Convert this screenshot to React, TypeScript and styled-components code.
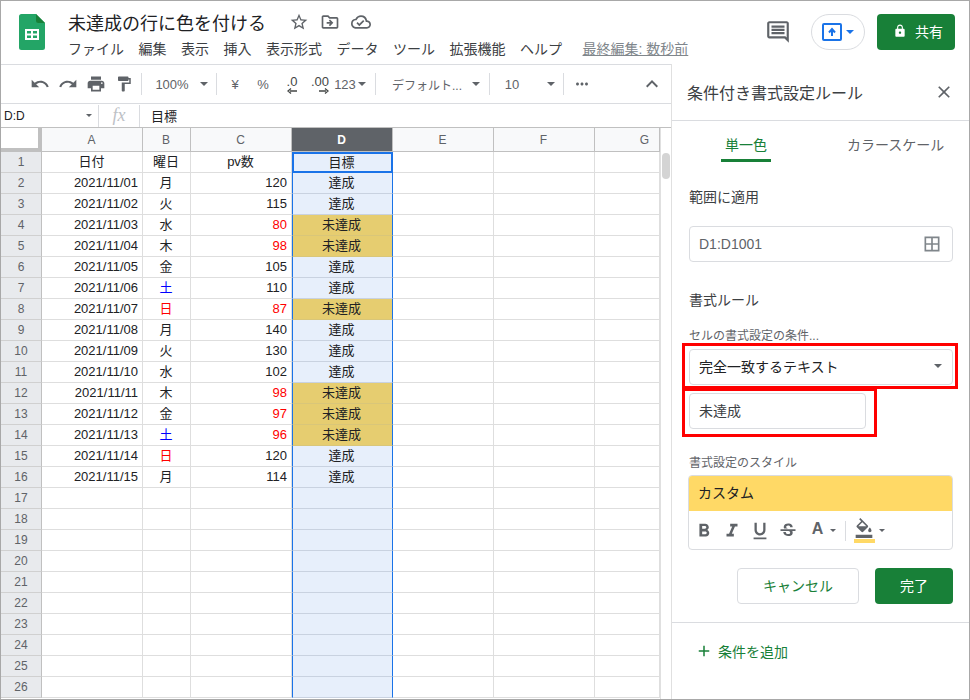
import styled, { createGlobalStyle } from 'styled-components'
import {
  MdAdd,
  MdBorderAll,
  MdClose,
  MdFormatBold,
  MdFormatColorFill,
  MdFormatItalic,
  MdFormatPaint,
  MdFormatUnderlined,
  MdKeyboardArrowUp,
  MdLock,
  MdMoreHoriz,
  MdOutlineCloudDone,
  MdOutlineComment,
  MdOutlineDriveFileMove,
  MdPrint,
  MdRedo,
  MdStarBorder,
  MdStrikethroughS,
  MdUndo
} from 'react-icons/md'

const FONT = `"Liberation Sans", "Noto Sans CJK JP", sans-serif`

const GlobalStyle = createGlobalStyle`
  html, body {
    margin: 0;
    padding: 0;
    background: #fff;
  }
  body {
    font-family: ${FONT};
    color: #202124;
  }
  * {
    box-sizing: border-box;
  }
`

const MENU = ['ファイル', '編集', '表示', '挿入', '表示形式', 'データ', 'ツール', '拡張機能', 'ヘルプ']
const COLUMNS = ['A', 'B', 'C', 'D', 'E', 'F', 'G']

type Row = { date: string; day: string; pv: number; dayColor?: string }

const ROWS: Row[] = [
  { date: '2021/11/01', day: '月', pv: 120 },
  { date: '2021/11/02', day: '火', pv: 115 },
  { date: '2021/11/03', day: '水', pv: 80 },
  { date: '2021/11/04', day: '木', pv: 98 },
  { date: '2021/11/05', day: '金', pv: 105 },
  { date: '2021/11/06', day: '土', pv: 110, dayColor: '#0000ff' },
  { date: '2021/11/07', day: '日', pv: 87, dayColor: '#ff0000' },
  { date: '2021/11/08', day: '月', pv: 140 },
  { date: '2021/11/09', day: '火', pv: 130 },
  { date: '2021/11/10', day: '水', pv: 102 },
  { date: '2021/11/11', day: '木', pv: 98 },
  { date: '2021/11/12', day: '金', pv: 97 },
  { date: '2021/11/13', day: '土', pv: 96, dayColor: '#0000ff' },
  { date: '2021/11/14', day: '日', pv: 120, dayColor: '#ff0000' },
  { date: '2021/11/15', day: '月', pv: 114 }
]

function SheetsLogo() {
  return (
    <svg width="26" height="36" viewBox="0 0 26 36">
      <path d="M2.5 0H17l9 9v24.5a2.5 2.5 0 0 1-2.5 2.5h-21A2.5 2.5 0 0 1 0 33.5v-31A2.5 2.5 0 0 1 2.5 0z" fill="#23a566" />
      <path d="M17 0l9 9h-6.5A2.5 2.5 0 0 1 17 6.5z" fill="#188038" />
      <path d="M6 15h14v11H6zm2 2v2.5h4V17zm6 0v2.5h4V17zm-6 4.500V24h4v-2.500zm6 0V24h4v-2.500z" fill="#fff" fillRule="evenodd" />
    </svg>
  )
}

function PresentIcon() {
  return (
    <svg width="20" height="18" viewBox="0 0 20 18">
      <rect x="1" y="1" width="18" height="16" rx="1" fill="none" stroke="#1a73e8" strokeWidth="2" />
      <path d="M10 13V7.500M7 9.500l3-3.500 3 3.500" fill="none" stroke="#1a73e8" strokeWidth="2" />
    </svg>
  )
}

function DecimalArrow({ $right }: { $right?: boolean }) {
  return (
    <svg width="10" height="6" viewBox="0 0 10 6">
      {$right ? (
        <path d="M0 3h7M6 .5L9 3 6 5.500" fill="none" stroke="#444746" strokeWidth="1.300" />
      ) : (
        <path d="M10 3H3M4 .5L1 3l3 2.500" fill="none" stroke="#444746" strokeWidth="1.300" />
      )}
    </svg>
  )
}

export default function App() {
  return (
    <Frame>
      <GlobalStyle />
      <Header>
        <LogoSlot>
          <SheetsLogo />
        </LogoSlot>
        <TitleBlock>
          <TitleRow>
            <DocTitle>未達成の行に色を付ける</DocTitle>
            <TitleIcons>
              <MdStarBorder size={20} />
              <MdOutlineDriveFileMove size={20} />
              <MdOutlineCloudDone size={20} />
            </TitleIcons>
          </TitleRow>
          <MenuRow>
            {MENU.map(item => (
              <MenuItem key={item}>{item}</MenuItem>
            ))}
            <LastEdit>最終編集: 数秒前</LastEdit>
          </MenuRow>
        </TitleBlock>
        <HeaderActions>
          <CommentButton>
            <MdOutlineComment size={26} />
          </CommentButton>
          <PresentButton>
            <PresentIcon />
            <Caret $color="#1a73e8" />
          </PresentButton>
          <ShareButton>
            <MdLock size={14} />
            共有
          </ShareButton>
        </HeaderActions>
      </Header>

      <Workspace>
        <SheetColumn>
          <Toolbar>
            <ToolSlot $width={28}>
              <MdUndo size={20} />
            </ToolSlot>
            <ToolSlot $width={28}>
              <MdRedo size={20} />
            </ToolSlot>
            <ToolSlot $width={28}>
              <MdPrint size={20} />
            </ToolSlot>
            <ToolSlot $width={28}>
              <MdFormatPaint size={18} />
            </ToolSlot>
            <ToolSeparator />
            <ToolText $width={54}>100%</ToolText>
            <ToolSlot $width={10}>
              <Caret />
            </ToolSlot>
            <ToolSeparator $gap={7} $after={3} />
            <ToolText $width={30}>¥</ToolText>
            <ToolText $width={26}>%</ToolText>
            <ToolSlot $width={32}>
              <DecimalTool>
                .0
                <DecimalArrow />
              </DecimalTool>
            </ToolSlot>
            <ToolSlot $width={24}>
              <DecimalTool>
                .00
                <DecimalArrow $right />
              </DecimalTool>
            </ToolSlot>
            <ToolText $width={26}>123</ToolText>
            <Caret />
            <ToolSeparator $gap={9} />
            <FontName>デフォルト...</FontName>
            <Caret />
            <ToolSeparator $gap={9} />
            <ToolText $width={26}>10</ToolText>
            <ToolSlot $width={30} $end>
              <Caret />
            </ToolSlot>
            <ToolSeparator $gap={8} />
            <ToolSlot $width={20}>
              <MdMoreHoriz size={18} />
            </ToolSlot>
            <ToolSlot $width={32} $push>
              <MdKeyboardArrowUp size={24} />
            </ToolSlot>
          </Toolbar>

          <FormulaBar>
            <NameBox>
              D:D
              <Caret $small />
            </NameBox>
            <FxBox>fx</FxBox>
            <FormulaText>目標</FormulaText>
          </FormulaBar>

          <SheetArea>
            <Grid>
              <Corner />
              {COLUMNS.map(col => (
                <ColumnHead key={col} $selected={col === 'D'} $clipped={col === 'G'}>
                  {col}
                </ColumnHead>
              ))}
              {Array.from({ length: 26 }, (_, i) => {
                const row = i === 0 ? undefined : ROWS[i - 1]
                const missed = !!row && row.pv < 100
                return (
                  <GridRow key={i}>
                    <RowHead>{i + 1}</RowHead>
                    <Cell $align={i === 0 ? 'center' : 'right'}>{i === 0 ? '日付' : row?.date}</Cell>
                    <Cell $align="center" $color={row?.dayColor}>
                      {i === 0 ? '曜日' : row?.day}
                    </Cell>
                    <Cell $align={i === 0 ? 'center' : 'right'} $color={missed ? '#ff0000' : undefined}>
                      {i === 0 ? 'pv数' : row?.pv}
                    </Cell>
                    <SelectedCell $active={i === 0} $missed={missed}>
                      {i === 0 ? '目標' : row ? (missed ? '未達成' : '達成') : ''}
                    </SelectedCell>
                    <Cell />
                    <Cell />
                    <Cell />
                  </GridRow>
                )
              })}
            </Grid>
            <ScrollTrack>
              <ScrollThumb />
            </ScrollTrack>
          </SheetArea>
        </SheetColumn>

        <Panel>
          <PanelHeader>
            <PanelTitle>条件付き書式設定ルール</PanelTitle>
            <MdClose size={20} />
          </PanelHeader>
          <Tabs>
            <Tab $active>単一色</Tab>
            <Tab>カラースケール</Tab>
          </Tabs>
          <PanelBody>
            <SectionLabel $top={25}>範囲に適用</SectionLabel>
            <Field $top={19}>
              D1:D1001
              <MdBorderAll size={20} color="#80868b" />
            </Field>
            <SectionLabel $top={28}>書式ルール</SectionLabel>
            <SmallLabel $top={18}>セルの書式設定の条件...</SmallLabel>
            <Highlighted $top={5}>
              <Field $dark>
                完全一致するテキスト
                <Caret />
              </Field>
              <RedFrame $inset="-6px -5px -4px -7px" />
            </Highlighted>
            <Highlighted $top={8} $width={177}>
              <Field $light>未達成</Field>
              <RedFrame $inset="-5px -11px -8px -7px" />
            </Highlighted>
            <SmallLabel $top={26}>書式設定のスタイル</SmallLabel>
            <StyleBox>
              <StylePreview>カスタム</StylePreview>
              <StyleTools>
                <StyleTool>
                  <MdFormatBold size={22} />
                </StyleTool>
                <StyleTool>
                  <MdFormatItalic size={22} />
                </StyleTool>
                <StyleTool>
                  <MdFormatUnderlined size={22} />
                </StyleTool>
                <StyleTool>
                  <MdStrikethroughS size={20} />
                </StyleTool>
                <TextColorTool>A</TextColorTool>
                <Caret $small />
                <StyleSeparator />
                <FillTool>
                  <MdFormatColorFill size={20} />
                  <FillBar />
                </FillTool>
                <Caret $small />
              </StyleTools>
            </StyleBox>
            <Actions>
              <CancelButton>キャンセル</CancelButton>
              <DoneButton>完了</DoneButton>
            </Actions>
          </PanelBody>
          <AddRow>
            <MdAdd size={18} />
            条件を追加
          </AddRow>
        </Panel>
      </Workspace>
    </Frame>
  )
}

const Frame = styled.div`
  width: 970px;
  height: 700px;
  border: 1px solid #a8a8a8;
  background: #fff;
  overflow: hidden;
  display: flex;
  flex-direction: column;
`

const Header = styled.header`
  display: flex;
  height: 64px;
  flex-shrink: 0;
  border-bottom: 1px solid #dadce0;
`

const LogoSlot = styled.div`
  width: 67px;
  padding: 13px 0 0 18px;
`

const TitleBlock = styled.div`
  display: flex;
  flex-direction: column;
`

const TitleRow = styled.div`
  display: flex;
  align-items: center;
  height: 34px;
  padding-top: 8px;
`

const DocTitle = styled.div`
  font-size: 18px;
  width: 198px;
  white-space: nowrap;
  color: #202124;
`

const TitleIcons = styled.div`
  display: flex;
  gap: 11px;
  margin-left: 23px;
  color: #5f6368;
`

const MenuRow = styled.nav`
  display: flex;
  align-items: center;
  height: 26px;
  gap: 14.500px;
`

const MenuItem = styled.span`
  font-size: 14px;
  color: #3c4043;
  white-space: nowrap;
`

const LastEdit = styled.span`
  font-size: 14px;
  color: #80868b;
  text-decoration: underline;
  margin-left: 6px;
  white-space: nowrap;
`

const HeaderActions = styled.div`
  display: flex;
  align-items: flex-start;
  margin-left: auto;
  padding: 13px 14px 0 0;
`

const CommentButton = styled.div`
  display: flex;
  width: 32px;
  height: 36px;
  align-items: center;
  justify-content: center;
  color: #5f6368;
  margin-right: 17px;
`

const PresentButton = styled.div`
  display: flex;
  width: 54px;
  height: 36px;
  align-items: center;
  justify-content: center;
  gap: 4px;
  border: 1px solid #dadce0;
  border-radius: 18px;
  margin-right: 12px;
`

const ShareButton = styled.div`
  display: flex;
  width: 78px;
  height: 36px;
  align-items: center;
  gap: 8px;
  padding: 0 0 2px 16px;
  background: #188038;
  color: #fff;
  border-radius: 4px;
  font-size: 14px;
`

const Caret = styled.span<{ $color?: string; $small?: boolean }>`
  display: inline-block;
  flex-shrink: 0;
  width: 0;
  height: 0;
  border-style: solid;
  border-color: ${p => p.$color ?? '#5f6368'} transparent transparent transparent;
  border-width: ${p => (p.$small ? '3px 3px 0 3px' : '4px 4px 0 4px')};
`

const Workspace = styled.div`
  display: flex;
  flex: 1;
  min-height: 0;
`

const SheetColumn = styled.div`
  display: flex;
  flex-direction: column;
  width: 670px;
  flex-shrink: 0;
`

const Toolbar = styled.div`
  display: flex;
  align-items: center;
  height: 39px;
  padding-left: 25px;
  border-bottom: 1px solid #dadce0;
  color: #5f6368;
  font-size: 13px;
`

const ToolSlot = styled.div<{ $width: number; $push?: boolean; $end?: boolean }>`
  display: flex;
  width: ${p => p.$width}px;
  height: 24px;
  align-items: center;
  justify-content: ${p => (p.$end ? 'flex-end' : 'center')};
  flex-shrink: 0;
  ${p => p.$push && 'margin: 0 3px 0 auto;'}
`

const ToolText = styled.div<{ $width: number }>`
  width: ${p => p.$width}px;
  flex-shrink: 0;
  text-align: center;
  white-space: nowrap;
`

const ToolSeparator = styled.div<{ $gap?: number; $after?: number }>`
  width: 1px;
  height: 22px;
  flex-shrink: 0;
  background: #dadce0;
  margin-left: ${p => p.$gap ?? 3}px;
  margin-right: ${p => p.$after ?? p.$gap ?? 3}px;
`

const DecimalTool = styled.div`
  display: flex;
  flex-direction: column;
  align-items: flex-end;
  font-size: 13px;
  line-height: 13px;
  color: #444746;
`

const FontName = styled.div`
  width: 87px;
  padding-left: 7px;
  white-space: nowrap;
  font-size: 12px;
  flex-shrink: 0;
  overflow: hidden;
`

const FormulaBar = styled.div`
  display: flex;
  align-items: center;
  height: 24px;
  flex-shrink: 0;
  border-bottom: 1px solid #c0c0c0;
  font-size: 12px;
`

const NameBox = styled.div`
  display: flex;
  align-items: center;
  justify-content: space-between;
  width: 98px;
  height: 22px;
  padding: 0 6px 0 3px;
  border-right: 1px solid #dadce0;
`

const FxBox = styled.div`
  width: 41px;
  height: 22px;
  text-align: center;
  border-right: 1px solid #dadce0;
  color: #bdc1c6;
  font: italic 18px/20px 'Liberation Serif', serif;
`

const FormulaText = styled.div`
  padding-left: 11px;
  font-size: 13px;
`

const SheetArea = styled.div`
  display: flex;
  flex: 1;
  min-height: 0;
  overflow: hidden;
`

const Grid = styled.div`
  width: 659px;
  display: grid;
  grid-template-columns: 41px 101px 48px 101px 101px 101px 101px 65px;
  grid-auto-rows: min-content;
`

const Corner = styled.div`
  height: 24px;
  background: #fff;
  border-right: 4px solid #c0c0c0;
  border-bottom: 4px solid #c0c0c0;
`

const ColumnHead = styled.div<{ $selected?: boolean; $clipped?: boolean }>`
  height: 24px;
  display: flex;
  align-items: center;
  justify-content: center;
  font-size: 12px;
  padding: ${p => (p.$clipped ? '0 0 0 35px' : '0 1px 0 0')};
  background: ${p => (p.$selected ? '#5f6368' : '#f8f9fa')};
  color: ${p => (p.$selected ? '#fff' : '#5f6368')};
  border-right: 1px solid #c0c0c0;
  border-bottom: 1px solid #c0c0c0;
  font-weight: ${p => (p.$selected ? 'bold' : 'normal')};
`

const GridRow = styled.div`
  display: contents;
`

const RowHead = styled.div`
  height: 21px;
  display: flex;
  align-items: center;
  justify-content: center;
  font-size: 12px;
  color: #5f6368;
  background: #e8eaed;
  border-right: 1px solid #c0c0c0;
  border-bottom: 1px solid #d0d0d0;
`

const Cell = styled.div<{ $align?: string; $color?: string }>`
  height: 21px;
  line-height: 20px;
  font-size: 13px;
  padding: 0 4px 0 3px;
  white-space: nowrap;
  overflow: hidden;
  text-align: ${p => p.$align ?? 'left'};
  color: ${p => p.$color ?? '#202124'};
  border-right: 1px solid #dedede;
  border-bottom: 1px solid #dedede;
`

const SelectedCell = styled.div<{ $active?: boolean; $missed?: boolean }>`
  height: 21px;
  line-height: 20px;
  font-size: 13px;
  text-align: center;
  padding-right: 2px;
  color: #202124;
  background: ${p => (p.$missed ? '#e6cd70' : '#e7effb')};
  border-left: 1px solid #1a73e8;
  border-right: 1px solid #1a73e8;
  border-bottom: 1px solid ${p => (p.$missed ? '#d9c679' : '#c9d2e0')};
  ${p => p.$active && 'border: 2px solid #1a73e8; line-height: 17px;'}
`

const ScrollTrack = styled.div`
  width: 11px;
  padding: 25px 1px 0 1px;
  border-left: 1px solid #e0e0e0;
`

const ScrollThumb = styled.div`
  height: 26px;
  border-radius: 4px;
  background: #d4d4d4;
`

const Panel = styled.aside`
  display: flex;
  flex-direction: column;
  flex: 1;
  border-left: 1px solid #e0e0e0;
  margin-top: -1px;
  background: #fff;
  z-index: 1;
`

const PanelHeader = styled.div`
  display: flex;
  align-items: center;
  justify-content: space-between;
  height: 57px;
  flex-shrink: 0;
  padding: 0 15px;
  border-bottom: 1px solid #dadce0;
  color: #5f6368;
`

const PanelTitle = styled.div`
  font-size: 16px;
  color: #3c4043;
`

const Tabs = styled.div`
  display: flex;
  height: 41px;
  flex-shrink: 0;
  padding-left: 49px;
  gap: 76px;
`

const Tab = styled.div<{ $active?: boolean }>`
  padding-top: 15px;
  font-size: 14px;
  line-height: 18px;
  text-align: center;
  white-space: nowrap;
  color: ${p => (p.$active ? '#188038' : '#5f6368')};
  ${p => p.$active && 'width: 50px; border-bottom: 3px solid #188038;'}
`

const PanelBody = styled.div`
  padding: 0 16px 0 17px;
`

const SectionLabel = styled.div<{ $top: number }>`
  margin-top: ${p => p.$top}px;
  font-size: 14px;
  line-height: 20px;
  color: #3c4043;
`

const SmallLabel = styled.div<{ $top: number }>`
  margin-top: ${p => p.$top}px;
  font-size: 12px;
  line-height: 16px;
  color: #5f6368;
`

const Field = styled.div<{ $top?: number; $dark?: boolean; $light?: boolean }>`
  display: flex;
  align-items: center;
  justify-content: space-between;
  height: 36px;
  margin-top: ${p => p.$top ?? 0}px;
  padding: 0 10px ${p => (p.$dark || p.$light ? 2 : 0)}px 9px;
  border: 1px solid #dadce0;
  border-radius: 4px;
  font-size: 14px;
  color: ${p => (p.$dark ? '#202124' : p.$light ? '#3c4043' : '#5f6368')};
`

const Highlighted = styled.div<{ $top: number; $width?: number }>`
  position: relative;
  margin-top: ${p => p.$top}px;
  ${p => p.$width && `width: ${p.$width}px;`}
`

const RedFrame = styled.div<{ $inset: string }>`
  position: absolute;
  inset: ${p => p.$inset};
  border: 3px solid #ff0000;
  pointer-events: none;
`

const StyleBox = styled.div`
  height: 75px;
  margin: 4px 0 0 -1px;
  border: 1px solid #dadce0;
  border-radius: 4px;
  overflow: hidden;
`

const StylePreview = styled.div`
  height: 35px;
  padding-left: 9px;
  background: #ffd966;
  font-size: 14px;
  line-height: 35px;
  color: #202124;
`

const StyleTools = styled.div`
  display: flex;
  align-items: center;
  height: 39px;
  padding-left: 1px;
  color: #5f6368;
`

const StyleTool = styled.div`
  display: flex;
  width: 28px;
  justify-content: center;
`

const TextColorTool = styled.div`
  width: 25px;
  margin-left: 3px;
  text-align: center;
  font-size: 16px;
  font-weight: bold;
  padding-bottom: 4px;
`

const StyleSeparator = styled.div`
  width: 1px;
  height: 20px;
  margin: 0 7px 0 9px;
  background: #dadce0;
`

const FillTool = styled.div`
  display: flex;
  flex-direction: column;
  align-items: center;
  width: 22px;
  margin-right: 4px;
`

const FillBar = styled.div`
  width: 21px;
  height: 4px;
  margin-top: 1px;
  background: #ffd966;
`

const Actions = styled.div`
  display: flex;
  justify-content: flex-end;
  gap: 16px;
  margin-top: 18px;
`

const CancelButton = styled.div`
  display: flex;
  width: 122px;
  height: 36px;
  padding-bottom: 2px;
  align-items: center;
  justify-content: center;
  border: 1px solid #dadce0;
  border-radius: 4px;
  font-size: 14px;
  color: #188038;
`

const DoneButton = styled.div`
  display: flex;
  width: 78px;
  height: 36px;
  padding-bottom: 2px;
  align-items: center;
  justify-content: center;
  border-radius: 4px;
  font-size: 14px;
  background: #188038;
  color: #fff;
`

const AddRow = styled.div`
  display: flex;
  align-items: center;
  gap: 5px;
  height: 60px;
  margin-top: 18px;
  padding: 0 0 4px 23px;
  border-top: 1px solid #dadce0;
  font-size: 14px;
  color: #188038;
`
